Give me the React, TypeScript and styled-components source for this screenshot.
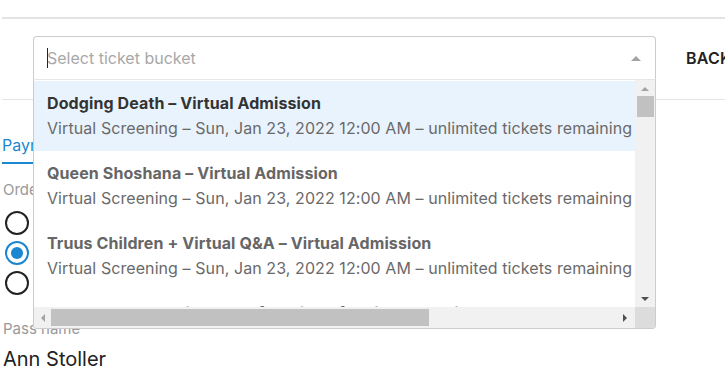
import React from "react";
import styled, { createGlobalStyle, css } from "styled-components";

const GlobalStyle = createGlobalStyle`
  body {
    margin: 0;
    background: #fff;
    font-family: Inter, "Noto Sans", sans-serif;
    color: #222;
  }
`;

const Page = styled.div`
  width: 725px;
  height: 370px;
  overflow: hidden;
  padding-left: 2px;
  box-sizing: border-box;
`;

const TopRule = styled.div`
  margin-top: 17px;
  height: 2px;
  background: #e4e4e4;
`;

const Header = styled.div`
  display: flex;
  align-items: center;
  padding: 17px 0 19px 31px;
  border-bottom: 1px solid #e4e4e4;
  white-space: nowrap;
`;

const SelectWrap = styled.div`
  position: relative;
  width: 623px;
  flex: none;
  z-index: 2;
`;

const Control = styled.div`
  height: 44px;
  box-sizing: border-box;
  border: 1px solid #cccccc;
  border-bottom-color: #e6e6e6;
  border-radius: 4px 4px 0 0;
  display: flex;
  align-items: center;
  padding: 0 14px 0 13px;
  background: #fff;
`;

const Caret = styled.span`
  width: 1px;
  height: 20px;
  background: #222;
  margin-right: -1px;
`;

const Placeholder = styled.span`
  flex: 1;
  font-size: 16px;
  color: #a8a8a8;
`;

const Arrow = styled.span<{ $dir: "up" | "down" | "left" | "right"; $color: string; $size?: number }>`
  width: 0;
  height: 0;
  display: block;
  ${({ $dir, $color, $size = 5 }) => {
    const s = `${$size}px solid transparent`;
    const c = `${$size}px solid ${$color}`;
    if ($dir === "up") return css`border-left: ${s}; border-right: ${s}; border-bottom: ${c};`;
    if ($dir === "down") return css`border-left: ${s}; border-right: ${s}; border-top: ${c};`;
    if ($dir === "left") return css`border-top: ${s}; border-bottom: ${s}; border-right: ${c};`;
    return css`border-top: ${s}; border-bottom: ${s}; border-left: ${c};`;
  }}
`;

const Menu = styled.div`
  position: absolute;
  top: 44px;
  left: 0;
  width: 100%;
  height: 249px;
  box-sizing: border-box;
  border: 1px solid #cccccc;
  border-top: none;
  border-radius: 0 0 4px 4px;
  background: #fff;
  display: grid;
  grid-template-columns: 1fr 20px;
  grid-template-rows: 1fr 21px;
  overflow: hidden;
`;

const Viewport = styled.div`
  overflow: hidden;
  padding-top: 1px;
`;

const Option = styled.div<{ $focused?: boolean }>`
  padding: 11px 13px 11px 13px;
  background: ${({ $focused }) => ($focused ? "#e9f3fd" : "#fff")};
  white-space: nowrap;
`;

const OptionTitle = styled.div<{ $focused?: boolean }>`
  font-size: 16px;
  line-height: 22px;
  font-weight: 700;
  letter-spacing: 0.1px;
  color: ${({ $focused }) => ($focused ? "#333" : "#666")};
`;

const OptionSub = styled.div`
  margin-top: 2px;
  font-size: 16px;
  line-height: 24px;
  letter-spacing: 0.08px;
  color: #6a6a6a;
`;

const VTrack = styled.div`
  background: #f1f1f1;
  display: flex;
  flex-direction: column;
  align-items: center;
  padding: 7px 0 6px;
`;

const VThumb = styled.div`
  width: 17px;
  height: 21px;
  background: #c1c1c1;
  margin: 5px 0 auto;
`;

const HTrack = styled.div`
  background: #f1f1f1;
  display: flex;
  align-items: center;
  padding: 0 8px 0 7px;
`;

const HThumb = styled.div`
  height: 17px;
  width: 378px;
  background: #c1c1c1;
  margin: 0 auto 0 6px;
`;

const Corner = styled.div`
  background: #dcdcdc;
`;

const BackButton = styled.span`
  margin-left: 30px;
  font-size: 16px;
  font-weight: 600;
  letter-spacing: 0.2px;
  color: #222;
`;

const Body = styled.div`
  padding-left: 1px;
`;

const Tabs = styled.div`
  display: flex;
  margin-top: 24px;
`;

const Tab = styled.div<{ $active?: boolean }>`
  padding: 10px 0 6px;
  font-size: 16px;
  line-height: 22px;
  color: ${({ $active }) => ($active ? "#1b87d0" : "#666")};
  border-bottom: 2px solid ${({ $active }) => ($active ? "#1b87d0" : "transparent")};
  width: 90px;
  margin-left: -1px;
`;

const FieldLabel = styled.div<{ $top: number }>`
  margin-top: ${({ $top }) => $top}px;
  font-size: 15px;
  line-height: 18px;
  color: #999;
`;

const RadioGroup = styled.div`
  margin-top: 9px;
  display: flex;
  flex-direction: column;
`;

const RadioRow = styled.label`
  height: 30px;
  display: flex;
  align-items: center;
  gap: 10px;
  font-size: 15px;
  padding-left: 2px;
`;

const RadioCircle = styled.span<{ $checked?: boolean }>`
  width: 24px;
  height: 24px;
  box-sizing: border-box;
  border-radius: 50%;
  border: 2.5px solid ${({ $checked }) => ($checked ? "#1b87d0" : "#222")};
  display: flex;
  align-items: center;
  justify-content: center;
  &::after {
    content: "";
    display: ${({ $checked }) => ($checked ? "block" : "none")};
    width: 12px;
    height: 12px;
    border-radius: 50%;
    background: #1b87d0;
  }
`;

const Value = styled.div`
  margin-top: 8px;
  font-size: 20px;
  line-height: 26px;
  color: #222;
`;

const options = [
  "Dodging Death – Virtual Admission",
  "Queen Shoshana – Virtual Admission",
  "Truus Children + Virtual Q&A – Virtual Admission",
  "Sharon Romero with Paul of Berlin Reflecting: The Discourse To Your Own Mind – Virtual Admission",
];

const sub = "Virtual Screening – Sun, Jan 23, 2022 12:00 AM – unlimited tickets remaining";

export default function App() {
  return (
    <Page>
      <GlobalStyle />
      <TopRule />
      <Header>
        <SelectWrap>
          <Control>
            <Caret />
            <Placeholder>Select ticket bucket</Placeholder>
            <Arrow $dir="up" $color="#a3a3a3" />
          </Control>
          <Menu>
            <Viewport>
              {options.map((o, i) => (
                <Option key={o} $focused={i === 0}>
                  <OptionTitle $focused={i === 0}>{o}</OptionTitle>
                  <OptionSub>{sub}</OptionSub>
                </Option>
              ))}
            </Viewport>
            <VTrack>
              <Arrow $dir="up" $color="#a3a3a3" $size={4} />
              <VThumb />
              <Arrow $dir="down" $color="#505050" $size={4} />
            </VTrack>
            <HTrack>
              <Arrow $dir="left" $color="#a3a3a3" $size={4} />
              <HThumb />
              <Arrow $dir="right" $color="#505050" $size={4} />
            </HTrack>
            <Corner />
          </Menu>
        </SelectWrap>
        <BackButton>BACK</BackButton>
      </Header>
      <Body>
        <Tabs>
          <Tab $active>Payment</Tab>
          <Tab>Tickets</Tab>
        </Tabs>
        <FieldLabel $top={17}>Order type</FieldLabel>
        <RadioGroup>
          <RadioRow>
            <RadioCircle />
            Free
          </RadioRow>
          <RadioRow>
            <RadioCircle $checked />
            Comp
          </RadioRow>
          <RadioRow>
            <RadioCircle />
            Paid
          </RadioRow>
        </RadioGroup>
        <FieldLabel $top={22}>Pass name</FieldLabel>
        <Value>Ann Stoller</Value>
      </Body>
    </Page>
  );
}
